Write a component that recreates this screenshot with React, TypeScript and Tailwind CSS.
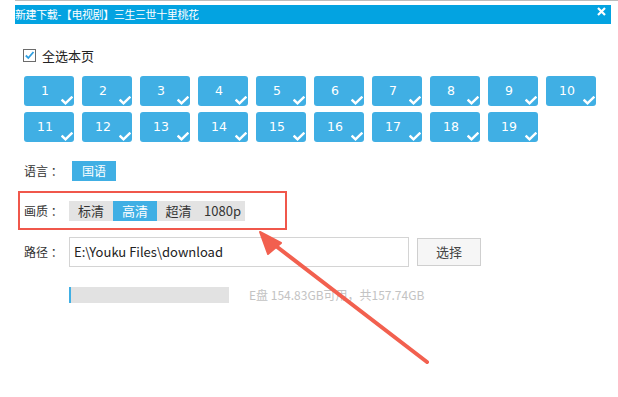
import React from "react";

const eps = Array.from({ length: 19 }, (_, i) => i + 1);

function Check() {
  return (
    <svg className="absolute right-[1px] bottom-[1px]" width="12" height="9" viewBox="0 0 12 9">
      <path d="M1.5 4.5 L4.5 7.3 L10.5 1.5" fill="none" stroke="#fff" strokeWidth="2.4" strokeLinecap="square" />
    </svg>
  );
}

export default function App() {
  return (
    <div
      className="relative w-[618px] h-[397px] bg-white overflow-hidden text-[#333]"
      style={{ fontFamily: '"Noto Sans CJK SC", "Microsoft YaHei", sans-serif' }}
    >
      <div className="ml-[15px] h-px bg-[#bdbdbd]" />
      <div className="ml-[15px] w-[596px] mt-[4px] h-[19px] bg-[#03a3e1] flex items-start justify-between text-white">
        <div className="text-[11px] leading-[14px] mt-[2px] tracking-[-0.4px]">新建下载-【电视剧】三生三世十里桃花</div>
        <svg className="mr-[5px] mt-[2px]" width="9" height="9" viewBox="0 0 9 9">
          <path d="M1 1 L8 8 M8 1 L1 8" stroke="#fff" strokeWidth="2.2" />
        </svg>
      </div>

      <div className="pl-[23px] mt-[25px] flex items-center h-[13px]">
        <svg width="13" height="13" viewBox="0 0 13 13">
          <rect x="0.5" y="0.5" width="12" height="12" fill="#fff" stroke="#6b6b6b" />
          <path d="M2.8 6.5 L5.3 9 L10.5 3" fill="none" stroke="#2e9ee0" strokeWidth="1.8" />
        </svg>
        <span className="ml-[6px] text-[13px] leading-[13px] text-[#222]">全选本页</span>
      </div>

      <div className="pl-[24px] mt-[14px] grid grid-cols-[repeat(10,50px)] gap-x-[8px] gap-y-[6px]">
        {eps.map((n) => (
          <div
            key={n}
            className="relative h-[30px] rounded-[3px] bg-[#40afe4] flex items-center justify-center pr-[8px] text-white"
            style={{ fontFamily: '"DejaVu Sans", Verdana, sans-serif' }}
          >
            <span className="text-[12.5px]">{n}</span>
            <Check />
          </div>
        ))}
      </div>

      <div className="pl-[24px] mt-[19px] flex items-center h-[20px]">
        <span className="w-[48px] text-[12px]">语言 ：</span>
        <span className="w-[44px] h-[20px] bg-[#40afe4] text-white text-[12px] flex items-center justify-center">国语</span>
      </div>

      <div className="ml-[18px] mt-[10px] w-[269px] h-[39px] border-2 border-[#f0574b] flex items-center pl-[4px]">
        <span className="w-[45px] text-[12px]">画质 ：</span>
        <div className="flex h-[20px] bg-[#e3e3e3] text-[13px]">
          <span className="w-[44px] flex items-center justify-center">标清</span>
          <span className="w-[44px] flex items-center justify-center bg-[#40afe4] text-white">高清</span>
          <span className="w-[43px] flex items-center justify-center">超清</span>
          <span className="w-[45px] flex items-center justify-center">1080p</span>
        </div>
      </div>

      <div className="pl-[24px] mt-[7px] flex items-center">
        <span className="w-[45px] text-[12px]">路径 ：</span>
        <div className="w-[340px] h-[30px] border border-[#d4d4d4] flex items-center pl-[4px] text-[13px] text-[#222]">
          E:\Youku Files\download
        </div>
        <div className="ml-[8px] w-[64px] h-[28px] border border-[#cfcfcf] bg-[#f6f6f6] flex items-center justify-center text-[13px] text-[#444]">
          选择
        </div>
      </div>

      <div className="pl-[69px] mt-[19px] flex items-center">
        <div className="w-[160px] h-[16px] bg-[#e2e2e2] border-l-2 border-[#40afe4]" />
        <span className="ml-[20px] text-[12px] text-[#c3c3c3]">E盘 154.83GB可用，共157.74GB</span>
      </div>

      <svg className="absolute left-0 top-0 pointer-events-none" width="618" height="397" viewBox="0 0 618 397">
        <line x1="427" y1="362" x2="272" y2="243" stroke="#f2604f" strokeWidth="4" strokeLinecap="round" />
        <path d="M260 232 L281 243 L268 254 Z" fill="#f2604f" stroke="#f2604f" strokeWidth="2" strokeLinejoin="round" />
      </svg>
    </div>
  );
}
